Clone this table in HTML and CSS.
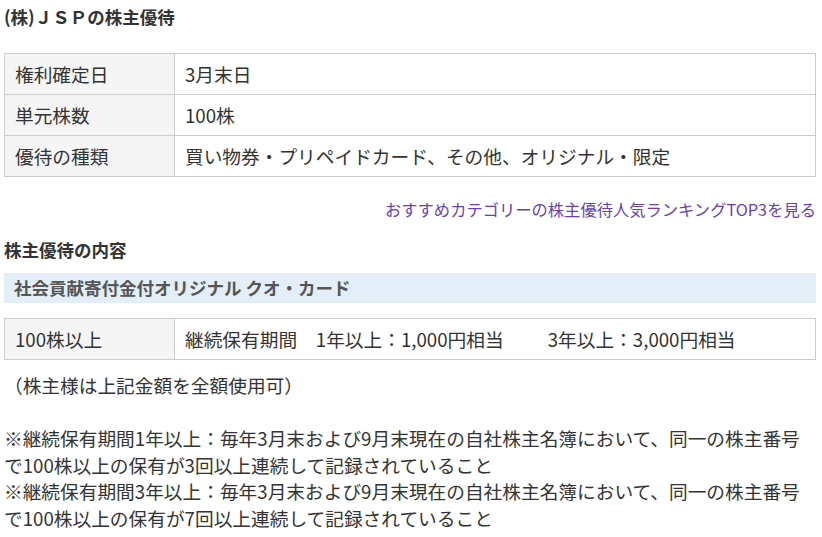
FILE: index.html
```html
<!DOCTYPE html>
<html lang="ja">
<head>
<meta charset="utf-8">
<title>(株)ＪＳＰの株主優待</title>
<link rel="stylesheet" href="styles.css">
</head>
<body>
<div class="page">
  <h1 class="title">(株)ＪＳＰの株主優待</h1>
  <table class="info">
    <tr><th>権利確定日</th><td>3月末日</td></tr>
    <tr><th>単元株数</th><td>100株</td></tr>
    <tr><th>優待の種類</th><td>買い物券・プリペイドカード、その他、オリジナル・限定</td></tr>
  </table>
  <div class="more"><a class="more-link" href="#">おすすめカテゴリーの株主優待人気ランキングTOP3を見る</a></div>
  <h2 class="section">株主優待の内容</h2>
  <div class="band">社会貢献寄付金付オリジナル クオ・カード</div>
  <table class="info detail">
    <tr><th>100株以上</th><td>継続保有期間　1年以上：1,000円相当<span class="gap"></span>3年以上：3,000円相当</td></tr>
  </table>
  <p class="note">（株主様は上記金額を全額使用可）<br><br>※継続保有期間1年以上：毎年3月末および9月末現在の自社株主名簿において、同一の株主番号で100株以上の保有が3回以上連続して記録されていること<br>※継続保有期間3年以上：毎年3月末および9月末現在の自社株主名簿において、同一の株主番号で100株以上の保有が7回以上連続して記録されていること</p>
</div>
</body>
</html>
```

FILE: styles.css
```css
html, body {
  margin: 0;
  padding: 0;
  background: #fff;
}
body {
  font-family: "Noto Sans CJK JP", "Noto Sans", sans-serif;
  color: #333;
  font-size: 18.7px;
}
.page {
  width: 812px;
  margin-left: 4px;
}
.title {
  margin: 0;
  font-size: 17.5px;
  font-weight: bold;
  line-height: 34px;
  color: #333;
}
.info {
  width: 100%;
  border-collapse: collapse;
  margin-top: 19px;
}
.info th,
.info td {
  border: 1px solid #ccc;
  height: 40px;
  padding: 0 10px;
  text-align: left;
  font-weight: normal;
  line-height: 26px;
  vertical-align: middle;
}
.info th {
  width: 149px;
  background: #f5f5f5;
}
.more {
  margin-top: 19px;
  text-align: right;
  line-height: 26px;
  font-size: 16.3px;
}
.more-link {
  color: #6b3fb0;
  text-decoration: none;
}
.section {
  margin: 15px 0 0;
  font-size: 17.5px;
  font-weight: bold;
  line-height: 26px;
}
.band {
  margin-top: 10px;
  height: 30px;
  line-height: 30px;
  padding: 0 10px;
  background: #e3eef9;
  color: #555;
  font-weight: bold;
  font-size: 17.5px;
}
.detail {
  margin-top: 15px;
}
.gap {
  display: inline-block;
  width: 44px;
}
.note {
  margin: 12px 0 0;
  line-height: 26.5px;
}
```
